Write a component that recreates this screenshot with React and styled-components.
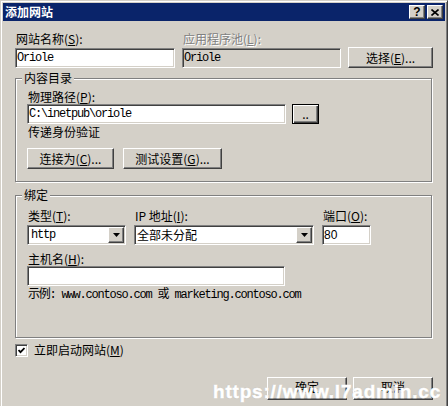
import styled, { createGlobalStyle, css } from "styled-components";

const GlobalStyle = createGlobalStyle`
  * { box-sizing: border-box; }
  html, body {
    margin: 0;
    padding: 0;
    overflow: hidden;
    background: #d4d0c8;
  }
  body {
    font-family: "Noto Sans CJK SC", "Liberation Sans", sans-serif;
    font-size: 12px;
    line-height: 14px;
    color: #000;
  }
`;

const raised = css`
  border: 1px solid;
  border-color: #fff #404040 #404040 #fff;
  box-shadow: inset -1px -1px 0 #808080, inset 1px 1px 0 #d4d0c8;
  background: #d4d0c8;
`;

const sunken = css`
  border: 1px solid;
  border-color: #808080 #fff #fff #808080;
  box-shadow: inset 1px 1px 0 #404040, inset -1px -1px 0 #d4d0c8;
`;

const monoFont = `"Liberation Mono", "Noto Sans CJK SC", monospace`;

const Window = styled.div`
  position: relative;
  width: 448px;
  height: 420px;
  padding: 2px;
  background: #d4d0c8;
  border: 1px solid;
  border-color: #d4d0c8 #404040 #404040 #d4d0c8;
  box-shadow: inset 1px 1px 0 #fff, inset -1px -1px 0 #808080;
`;

const TitleBar = styled.div`
  display: flex;
  align-items: center;
  height: 18px;
  padding: 0 2px;
  background: #0a246a;
`;

const TitleText = styled.span`
  flex: 1;
  color: #fff;
  font-weight: bold;
  font-size: 12px;
  line-height: 18px;
`;

const CaptionButtons = styled.div`
  display: flex;
  gap: 2px;
`;

const CaptionButton = styled.div`
  ${raised}
  width: 16px;
  height: 14px;
  display: flex;
  align-items: center;
  justify-content: center;
  font: bold 12px "Liberation Sans", sans-serif;
  line-height: 12px;
`;

const Body = styled.div`
  display: flex;
  flex-direction: column;
  padding: 11px 12px 0;
`;

const SiteGrid = styled.div`
  display: grid;
  grid-template-columns: 160px 159px 85px;
  justify-content: space-between;
  row-gap: 2px;
`;

const Label = styled.label`
  display: block;
  padding-left: 1px;
  white-space: nowrap;
  line-height: 14px;
  color: ${(p) => (p.$disabled ? "#808080" : "#000")};
  text-shadow: ${(p) => (p.$disabled ? "1px 1px 0 #fff" : "none")};
  margin-top: ${(p) => p.$top ?? 0}px;
`;

const TextInput = styled.input`
  ${sunken}
  width: ${(p) => (p.$w ? `${p.$w}px` : "100%")};
  height: 20px;
  margin: 0;
  padding: 0 1px;
  background: ${(p) => (p.$grey ? "#d4d0c8" : "#fff")};
  color: #000;
  font-family: ${(p) => (p.$sans ? `"Liberation Sans", sans-serif` : monoFont)};
  font-size: 12px;
  letter-spacing: ${(p) => (p.$sans ? "0" : "-1.2px")};
  outline: none;
`;

const PushButton = styled.button`
  ${raised}
  width: ${(p) => p.$w}px;
  height: ${(p) => p.$h ?? 21}px;
  margin: ${(p) => p.$margin ?? "0"};
  padding: 0 0 ${(p) => p.$lift ?? 0}px;
  color: #000;
  font-family: "Noto Sans CJK SC", sans-serif;
  font-size: 12px;
  line-height: 14px;
  white-space: nowrap;

  ${(p) =>
    p.$default &&
    css`
      border-color: #000;
      box-shadow: inset 1px 1px 0 #fff, inset -1px -1px 0 #404040,
        inset -2px -2px 0 #808080;
    `}
`;

const Group = styled.fieldset`
  width: calc(100% - 1px);
  min-width: 0;
  margin: ${(p) => p.$top}px 0 0;
  padding: 5px 11px ${(p) => p.$bottom}px;
  border: 1px solid #808080;
  box-shadow: 1px 1px 0 #fff, inset 1px 1px 0 #fff;
`;

const Legend = styled.legend`
  margin-left: -5px;
  padding: 0 2px;
  line-height: 14px;
  background: #d4d0c8;
`;

const PathRow = styled.div`
  display: flex;
  align-items: center;
  gap: 6px;
`;

const Note = styled.div`
  margin-top: ${(p) => p.$top ?? 0}px;
  padding-left: 1px;
  white-space: nowrap;
  font-family: ${(p) => (p.$mono ? monoFont : "inherit")};
  letter-spacing: ${(p) => (p.$mono ? "-1.2px" : "0")};
`;

const ButtonRow = styled.div`
  display: flex;
  gap: ${(p) => p.$gap}px;
  margin-top: ${(p) => p.$top}px;
  justify-content: ${(p) => (p.$end ? "flex-end" : "flex-start")};
`;

const BindGrid = styled.div`
  display: grid;
  grid-template-columns: 99px 180px 49px;
  column-gap: 8px;
  row-gap: 2px;
  padding-top: 2px;
`;

const Combo = styled.div`
  ${sunken}
  display: flex;
  align-items: center;
  height: 20px;
  padding: 1px;
  background: #fff;
`;

const ComboText = styled.span`
  flex: 1;
  margin-left: ${(p) => (p.$mono ? 2 : 1)}px;
  white-space: nowrap;
  font-family: ${(p) => (p.$mono ? monoFont : "inherit")};
  letter-spacing: ${(p) => (p.$mono ? "-1.2px" : "0")};
`;

const ComboArrow = styled.span`
  ${raised}
  display: flex;
  align-items: center;
  justify-content: center;
  width: 16px;
  height: 16px;
`;

const CheckRow = styled.label`
  display: flex;
  align-items: center;
  gap: 6px;
  margin-top: 5px;
  line-height: 14px;
`;

const CheckBox = styled.span`
  ${sunken}
  display: flex;
  align-items: center;
  justify-content: center;
  width: 13px;
  height: 13px;
  background: #fff;
`;

const Watermark = styled.div`
  position: absolute;
  left: 212px;
  top: 380px;
  color: #fff;
  font: bold 19px "Liberation Sans", sans-serif;
  letter-spacing: 0.8px;
  -webkit-text-stroke: 0.6px #fff;
  text-shadow: 0 0 1px rgba(0, 0, 0, 0.3);
  pointer-events: none;
`;

function Arrow() {
  return (
    <svg width="7" height="4" viewBox="0 0 7 4">
      <polygon points="0,0 7,0 3.5,4" fill="#000" />
    </svg>
  );
}

export default function App() {
  return (
    <>
      <GlobalStyle />
      <Window>
        <TitleBar>
          <TitleText>添加网站</TitleText>
          <CaptionButtons>
            <CaptionButton>?</CaptionButton>
            <CaptionButton>
              <svg width="8" height="7" viewBox="0 0 8 7">
                <path d="M0.5 0.5 L7.5 6.5 M7.5 0.5 L0.5 6.5" stroke="#000" strokeWidth="1.6" />
              </svg>
            </CaptionButton>
          </CaptionButtons>
        </TitleBar>

        <Body>
          <SiteGrid>
            <Label>网站名称(<u>S</u>):</Label>
            <Label $disabled>应用程序池(<u>L</u>):</Label>
            <span />
            <TextInput defaultValue="Oriole" />
            <TextInput defaultValue="Oriole" readOnly $grey />
            <PushButton $w={85} $margin="-1px 0 0">
              选择(<u>E</u>)...
            </PushButton>
          </SiteGrid>

          <Group $top={3} $bottom={12}>
            <Legend>内容目录</Legend>
            <Label>物理路径(<u>P</u>):</Label>
            <PathRow>
              <TextInput $w={259} defaultValue="C:\inetpub\oriole" />
              <PushButton $w={27} $h={20} $default>
                ..
              </PushButton>
            </PathRow>
            <Note $top={1}>传递身份验证</Note>
            <ButtonRow $gap={9} $top={9}>
              <PushButton $w={87}>连接为(<u>C</u>)...</PushButton>
              <PushButton $w={99}>测试设置(<u>G</u>)...</PushButton>
            </ButtonRow>
          </Group>

          <Group $top={6} $bottom={35}>
            <Legend>绑定</Legend>
            <BindGrid>
              <Label>类型(<u>T</u>):</Label>
              <Label>IP 地址(<u>I</u>):</Label>
              <Label>端口(<u>O</u>):</Label>
              <Combo>
                <ComboText $mono>http</ComboText>
                <ComboArrow>
                  <Arrow />
                </ComboArrow>
              </Combo>
              <Combo>
                <ComboText>全部未分配</ComboText>
                <ComboArrow>
                  <Arrow />
                </ComboArrow>
              </Combo>
              <TextInput defaultValue="80" $sans />
            </BindGrid>
            <Label $top={7}>主机名(<u>H</u>):</Label>
            <TextInput $w={258} defaultValue="" />
            <Note $top={2} $mono>
              示例: www.contoso.com 或 marketing.contoso.com
            </Note>
          </Group>

          <CheckRow>
            <CheckBox>
              <svg width="7" height="7" viewBox="0 0 7 7">
                <path d="M0.5 3 L2.5 5.2 L6.5 1" fill="none" stroke="#000" strokeWidth="1.8" />
              </svg>
            </CheckBox>
            <span>
              立即启动网站(<u>M</u>)
            </span>
          </CheckRow>

          <ButtonRow $gap={6} $top={20} $end>
            <PushButton $w={80} $h={23} $lift={3}>
              确定
            </PushButton>
            <PushButton $w={80} $h={23} $lift={3}>
              取消
            </PushButton>
          </ButtonRow>
        </Body>

        <Watermark>https://www.l7admin.cc</Watermark>
      </Window>
    </>
  );
}
